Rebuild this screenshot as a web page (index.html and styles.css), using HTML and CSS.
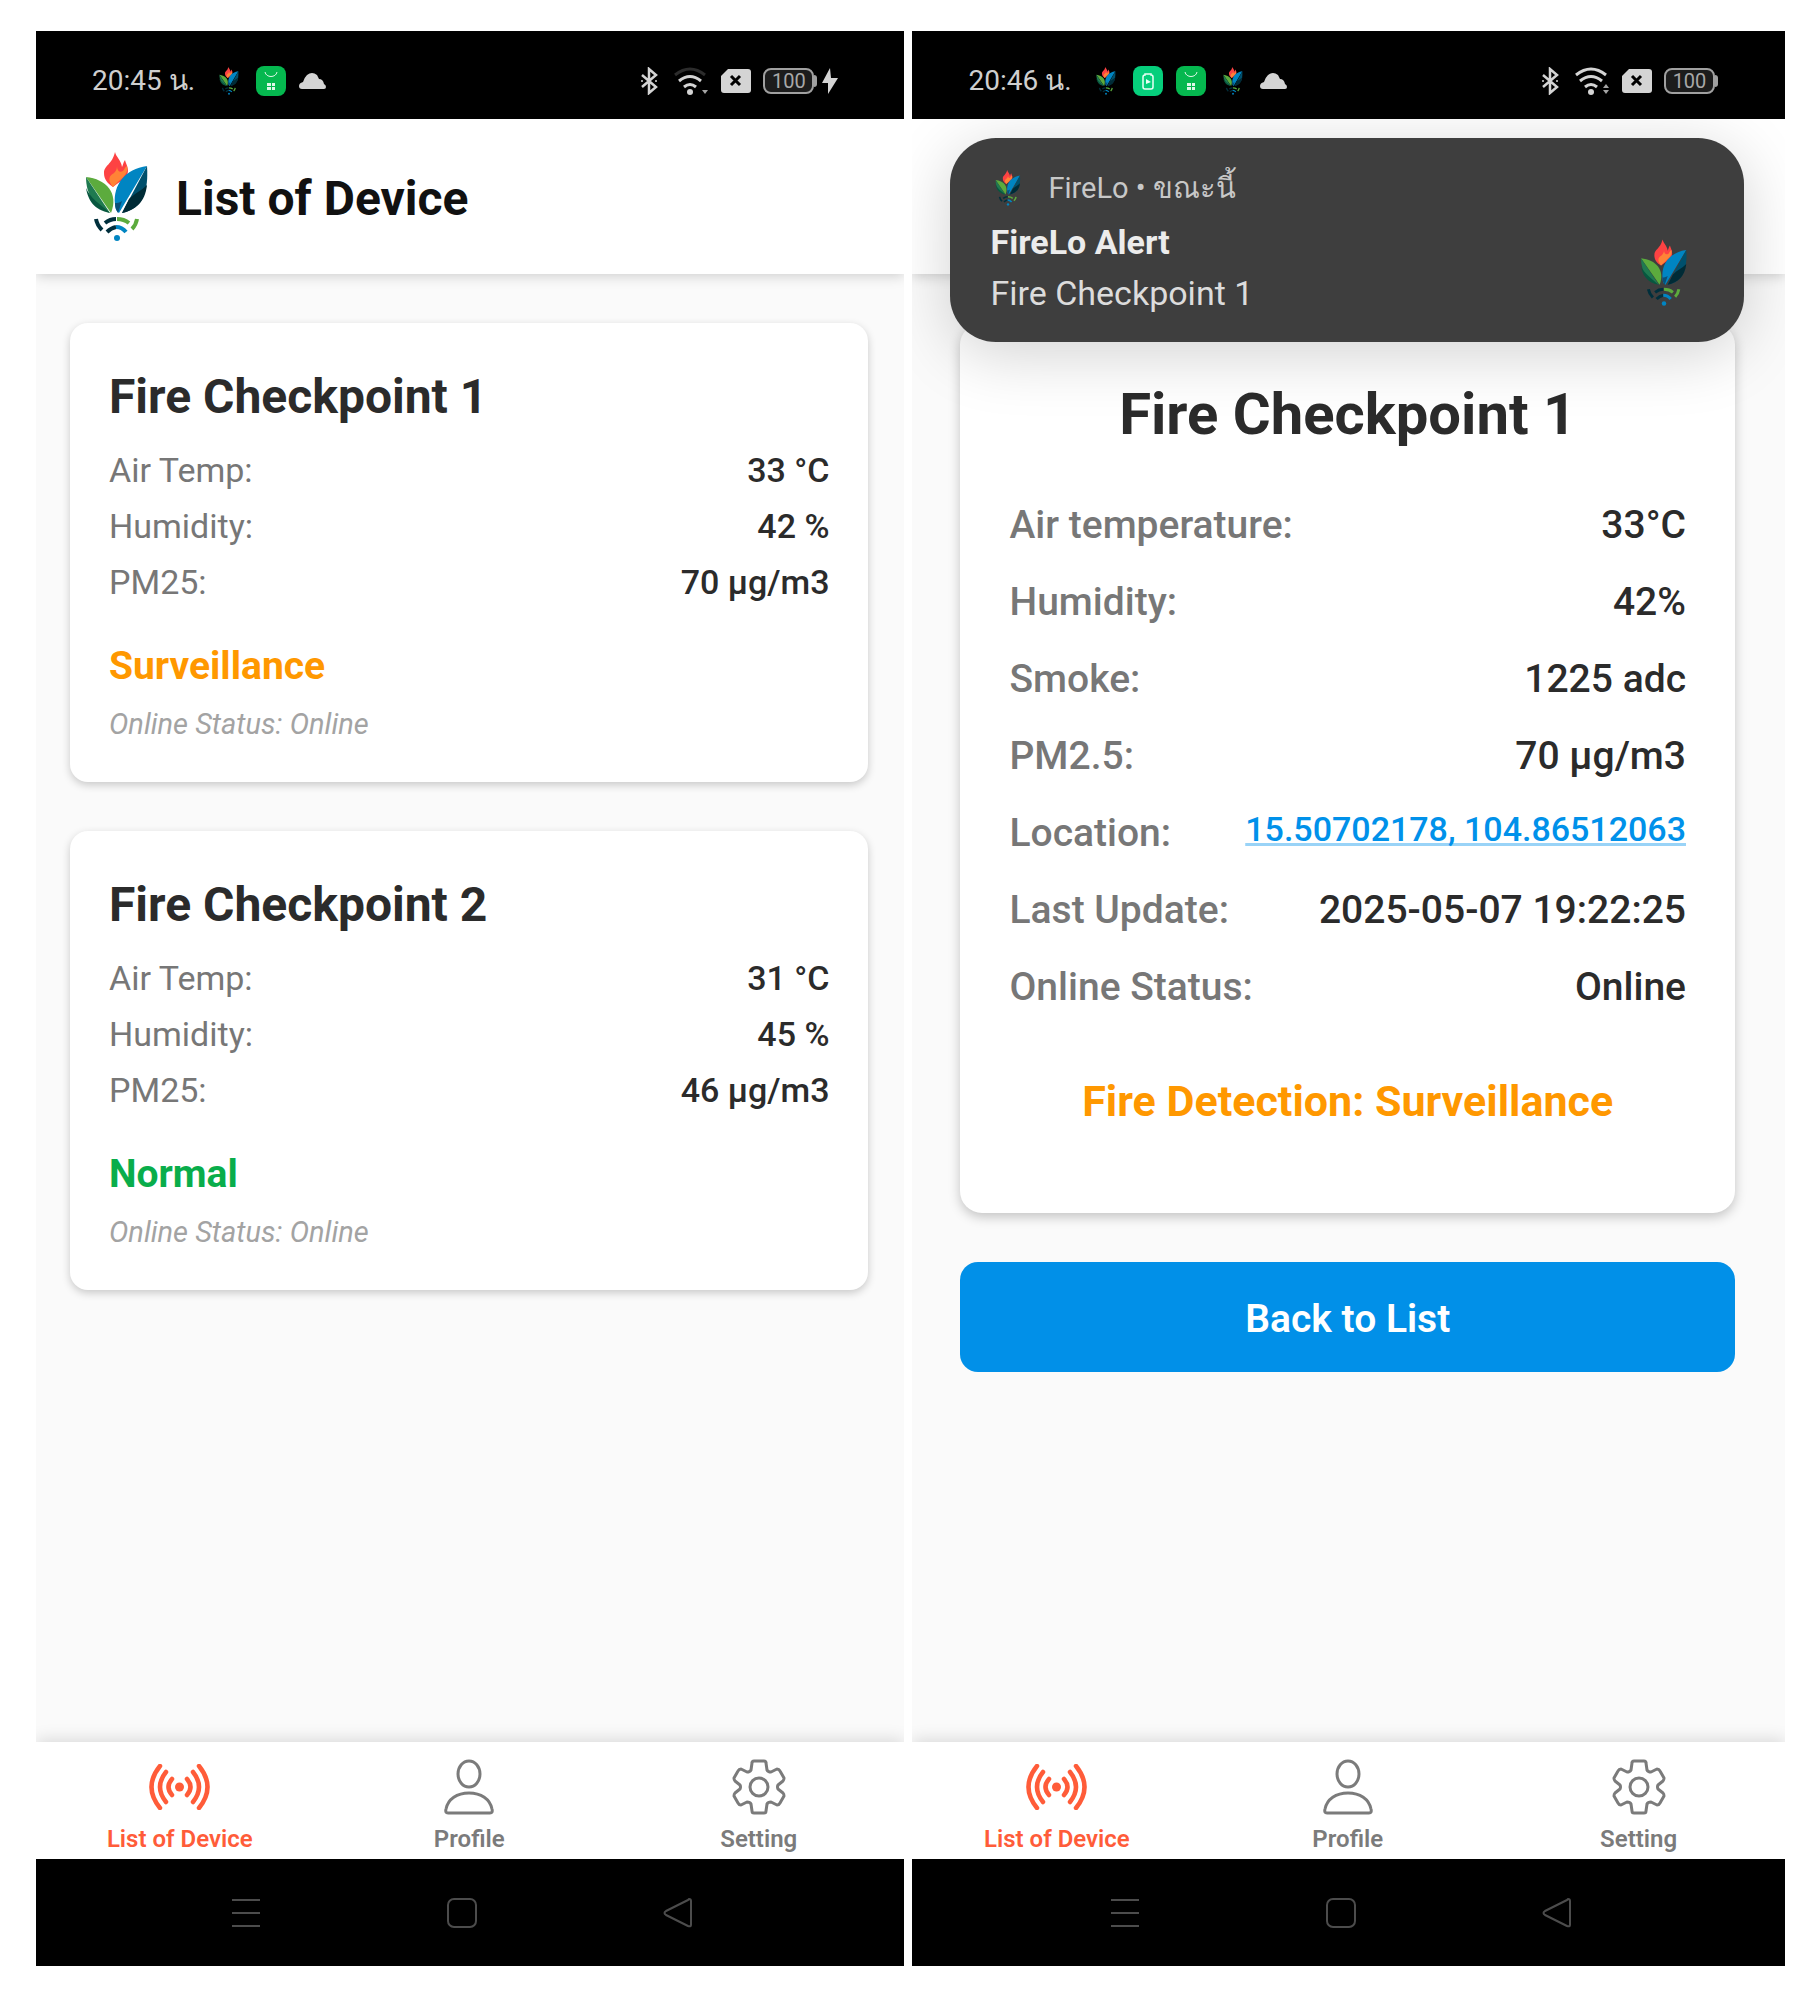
FILE: index.html
```html
<!DOCTYPE html>
<html lang="en">
<head>
<meta charset="utf-8">
<title>FireLo</title>
<link rel="stylesheet" href="styles.css">
</head>
<body>
<svg class="sprite" aria-hidden="true">
  <symbol id="logo" viewBox="0 0 62 90">
    <path fill="#fd4243" d="M29 0c1 5 6 8 7 15 1-2 1-4 3-7 1 4 3 6 3 11 0 6-7 10-15 16-6-4-9-8-9-14 0-8 8-8 11-21z"/>
    <path fill="#ff8336" d="M31 14c0 5 3 7 6 5 1-1 2-4 4-5 2 9-7 13-14 21-7-9-2-12 1-14 2-2 3-4 3-7z"/>
    <path fill="#5cab3d" d="M0 25c20 2 33 16 25 36z"/>
    <path fill="#1f7a50" d="M0 25c8 12 16 24 24 36C10 56 0 44 0 25z"/>
    <path fill="#08573f" d="M0 36c4 10 14 16 24 25C8 58 2 48 0 36z"/>
    <path fill="#0085c2" d="M61 14C39 17 27 33 29 52c0 4 1 7 4 9z"/>
    <path fill="#0a4f77" d="M29 51c2 0 4 0 7-2l-4 12c-2-3-3-6-3-10z"/>
    <path fill="#00506d" d="M61 14L36 61c18-4 27-17 25-47z"/>
    <path fill="#002b36" d="M61 33c-6 6-12 8-18 14l-7 14c14-3 23-11 25-28z"/>
    <g fill="none" stroke-width="4">
      <path stroke="#002f3c" d="M10 67q1 6 6 11M19 71q5-4 11-4M21 80q4-4 9-5"/>
      <path stroke="#5cab3d" d="M31 67q7 0 12 4M51 67q-1 6-5 10"/>
      <path stroke="#0085c2" d="M30 75q6 0 10 5"/>
    </g>
    <circle cx="31" cy="86" r="3" fill="#0085c2"/>
  </symbol>
  <symbol id="shop" viewBox="0 0 30 30">
    <rect width="30" height="30" rx="8" fill="#05b84f"/>
    <path fill="none" stroke="#dff7e8" stroke-width="1" d="M9 6c1 6 11 6 12 0"/>
    <path fill="#dff7e8" d="M11 17h4v3h-4zM16 17h3v3h-3zM11 21h4v3h-4zM16 21h3v3h-3z"/>
  </symbol>
  <symbol id="power" viewBox="0 0 30 30">
    <rect width="30" height="30" rx="8" fill="#06cf7c"/>
    <path fill="none" stroke="#eafff5" stroke-width="1.5" d="M12 8h6v1q2 0 2 2v10q0 2-2 2h-6q-2 0-2-2V11q0-2 2-2z"/>
    <path fill="#eafff5" d="M13 13l5 3-5 2z"/>
  </symbol>
  <symbol id="cloud" viewBox="0 0 27 16">
    <path fill="#d4d4d4" d="M3 16Q0 16 0 13q0-3 4-4 1-4 4-7 5-4 10 0l2 4q4 0 5 5 2 1 2 3 0 2-2 2z"/>
  </symbol>
  <symbol id="bluetooth" viewBox="0 0 18 28">
    <path fill="none" stroke="#d4d4d4" stroke-width="2.500" d="M2 8l14 12-7 6V2l7 6L2 20"/>
    <circle cx="2" cy="14" r="1" fill="#d4d4d4"/><circle cx="16" cy="14" r="1" fill="#d4d4d4"/>
  </symbol>
  <symbol id="wifi" viewBox="0 0 35 28">
    <g fill="none" stroke="#d4d4d4" stroke-width="3">
      <path d="M5 14q11-9 22 0M10 20q6-5 12 0"/>
    </g>
    <circle cx="16" cy="25" r="3" fill="#d4d4d4"/>
    <path fill="#a5a5a5" d="M28 23h6l-3 4z"/>
  </symbol>
  <symbol id="sim" viewBox="0 0 30 24">
    <path fill="#d4d4d4" d="M7 0h20q3 0 3 3v18q0 3-3 3H3q-3 0-3-3V7z"/>
    <path stroke="#000" stroke-width="3" d="M10 7l9 9M19 7l-9 9"/>
  </symbol>
  <symbol id="bolt" viewBox="0 0 16 26">
    <path fill="#d4d4d4" d="M8 0L0 15h6v11l10-16H9z"/>
  </symbol>
  <symbol id="signal" viewBox="0 0 61 46">
    <circle cx="30.500" cy="23" r="4.500" fill="currentColor"/>
    <g fill="none" stroke="currentColor" stroke-width="4.500" stroke-linecap="round">
      <path d="M23 15q-7 8 0 16M17 8q-12 15 0 30M11 2q-17 21 0 42M38 15q7 8 0 16M44 8q12 15 0 30M50 2q17 21 0 42"/>
    </g>
  </symbol>
  <symbol id="person" viewBox="0 0 50 56">
    <g fill="none" stroke="currentColor" stroke-width="3">
      <ellipse cx="25" cy="15" rx="11" ry="13"/>
      <path d="M4 54q-3 0-2-4c2-10 11-16 23-16s21 6 23 16q1 4-2 4z"/>
    </g>
  </symbol>
  <symbol id="gear" viewBox="0 0 54 56">
    <g fill="none" stroke="currentColor" stroke-width="3" stroke-linejoin="round">
      <circle cx="27" cy="28" r="9"/>
      <path d="M22 2h10q2 0 2 2l1 7q1 2 4 2l6-3q2 0 3 2l4 7q0 2-1 3l-5 4q-1 2 0 4l5 4q1 1 1 3l-4 7q-1 2-3 2l-6-3q-3 0-4 2l-1 7q0 2-2 2H22q-2 0-2-2l-1-7q-1-2-4-2l-6 3q-2 0-3-2l-4-7q0-2 1-3l5-4q1-2 0-4l-5-4q-1-1-1-3l4-7q1-2 3-2l6 3q3 0 4-2l1-7q0-2 2-2z"/>
    </g>
  </symbol>
  <symbol id="menu" viewBox="0 0 30 32">
    <path stroke="currentColor" stroke-width="2" d="M1 3h28M1 16h28M1 29h28"/>
  </symbol>
  <symbol id="home" viewBox="0 0 30 32">
    <rect x="1" y="2" width="28" height="28" rx="6" fill="none" stroke="currentColor" stroke-width="2"/>
  </symbol>
  <symbol id="back" viewBox="0 0 30 32">
    <path fill="none" stroke="currentColor" stroke-width="2" stroke-linejoin="round" d="M26 2q2 0 2 2v24q0 2-3 1L3 18q-3-2 0-4L25 3z"/>
  </symbol>
</svg>

<section class="phone">
  <div class="statusbar">
    <span class="clock">20:45 น.</span>
    <div class="notices">
      <svg class="i-logo"><use href="#logo"/></svg>
      <svg class="i-app"><use href="#shop"/></svg>
      <svg class="i-cloud"><use href="#cloud"/></svg>
    </div>
    <div class="system">
      <svg class="i-bt"><use href="#bluetooth"/></svg>
      <svg class="i-wifi"><use href="#wifi"/><path d="M1 8q15-12 30 0" fill="none" stroke="#2c2c2c" stroke-width="3"/></svg>
      <svg class="i-sim"><use href="#sim"/></svg>
      <span class="battery">100</span>
      <svg class="i-bolt"><use href="#bolt"/></svg>
    </div>
  </div>
  <header class="appbar">
    <svg class="appbar-logo"><use href="#logo"/></svg>
    <h1 class="appbar-title">List of Device</h1>
  </header>
  <main class="content content-list">
    <article class="card device">
      <h2 class="device-name">Fire Checkpoint 1</h2>
      <dl class="readings">
        <div class="reading"><dt>Air Temp:</dt><dd>33 °C</dd></div>
        <div class="reading"><dt>Humidity:</dt><dd>42 %</dd></div>
        <div class="reading"><dt>PM25:</dt><dd>70 µg/m3</dd></div>
      </dl>
      <p class="device-state warn">Surveillance</p>
      <p class="device-online">Online Status: Online</p>
    </article>
    <article class="card device">
      <h2 class="device-name">Fire Checkpoint 2</h2>
      <dl class="readings">
        <div class="reading"><dt>Air Temp:</dt><dd>31 °C</dd></div>
        <div class="reading"><dt>Humidity:</dt><dd>45 %</dd></div>
        <div class="reading"><dt>PM25:</dt><dd>46 µg/m3</dd></div>
      </dl>
      <p class="device-state ok">Normal</p>
      <p class="device-online">Online Status: Online</p>
    </article>
  </main>
  <nav class="tabs">
    <a class="tab active" href="#list"><svg class="i-signal"><use href="#signal"/></svg>List of Device</a>
    <a class="tab" href="#profile"><svg class="i-person"><use href="#person"/></svg>Profile</a>
    <a class="tab" href="#setting"><svg class="i-gear"><use href="#gear"/></svg>Setting</a>
  </nav>
  <div class="sysnav">
    <button class="sysbtn" aria-label="Recent apps"><svg><use href="#menu"/></svg></button>
    <button class="sysbtn" aria-label="Home"><svg><use href="#home"/></svg></button>
    <button class="sysbtn" aria-label="Back"><svg><use href="#back"/></svg></button>
  </div>
</section>

<section class="phone">
  <div class="statusbar">
    <span class="clock">20:46 น.</span>
    <div class="notices">
      <svg class="i-logo"><use href="#logo"/></svg>
      <svg class="i-app"><use href="#power"/></svg>
      <svg class="i-app"><use href="#shop"/></svg>
      <svg class="i-logo"><use href="#logo"/></svg>
      <svg class="i-cloud"><use href="#cloud"/></svg>
    </div>
    <div class="system system-unplugged">
      <svg class="i-bt"><use href="#bluetooth"/></svg>
      <svg class="i-wifi"><use href="#wifi"/><path d="M1 8q15-12 30 0" fill="none" stroke="#d4d4d4" stroke-width="3"/><path d="M28 21l3-4 3 4z" fill="#a5a5a5"/></svg>
      <svg class="i-sim"><use href="#sim"/></svg>
      <span class="battery">100</span>
    </div>
  </div>
  <div class="screen">
    <header class="appbar"></header>
    <aside class="toast">
      <div class="toast-text">
        <p class="toast-source"><svg class="toast-icon"><use href="#logo"/></svg>FireLo • ขณะนี้</p>
        <p class="toast-title">FireLo Alert</p>
        <p class="toast-body">Fire Checkpoint 1</p>
      </div>
      <svg class="toast-logo"><use href="#logo"/></svg>
    </aside>
    <main class="content content-detail">
      <article class="card detail">
        <h2 class="detail-name">Fire Checkpoint 1</h2>
        <dl class="facts">
          <div class="fact"><dt>Air temperature:</dt><dd>33°C</dd></div>
          <div class="fact"><dt>Humidity:</dt><dd>42%</dd></div>
          <div class="fact"><dt>Smoke:</dt><dd>1225 adc</dd></div>
          <div class="fact"><dt>PM2.5:</dt><dd>70 µg/m3</dd></div>
          <div class="fact"><dt>Location:</dt><dd><a class="coords" href="#map">15.50702178, 104.86512063</a></dd></div>
          <div class="fact"><dt>Last Update:</dt><dd>2025-05-07 19:22:25</dd></div>
          <div class="fact"><dt>Online Status:</dt><dd>Online</dd></div>
        </dl>
        <p class="detection warn">Fire Detection: Surveillance</p>
      </article>
      <button class="primary">Back to List</button>
    </main>
  </div>
  <nav class="tabs">
    <a class="tab active" href="#list"><svg class="i-signal"><use href="#signal"/></svg>List of Device</a>
    <a class="tab" href="#profile"><svg class="i-person"><use href="#person"/></svg>Profile</a>
    <a class="tab" href="#setting"><svg class="i-gear"><use href="#gear"/></svg>Setting</a>
  </nav>
  <div class="sysnav">
    <button class="sysbtn" aria-label="Recent apps"><svg><use href="#menu"/></svg></button>
    <button class="sysbtn" aria-label="Home"><svg><use href="#home"/></svg></button>
    <button class="sysbtn" aria-label="Back"><svg><use href="#back"/></svg></button>
  </div>
</section>
</body>
</html>
```
FILE: styles.css
```css
* { box-sizing: border-box; }

body {
  margin: 0;
  min-height: 100vh;
  padding: 31px 30px 29px 36px;
  display: grid;
  grid-template-columns: 868fr 872fr;
  gap: 8px;
  background: #fff;
  font-family: Roboto, "Noto Sans", sans-serif;
  color: #2b2b2b;
}

h1, h2, p, dl, dd { margin: 0; }
svg { display: block; flex: none; }
.sprite { position: absolute; width: 0; height: 0; }

.phone {
  display: flex;
  flex-direction: column;
  min-width: 0;
  overflow: hidden;
  background: #fafafa;
}

/* Status bar */
.statusbar {
  display: flex;
  align-items: center;
  height: 88px;
  padding: 12px 66px 0 56px;
  background: #000;
  color: #cfcfcf;
}
.clock { font-size: 28px; line-height: 36px; }
.notices { display: flex; align-items: center; gap: 13px; margin-left: 20px; }
.system { display: flex; align-items: center; gap: 12px; margin-left: auto; }
.system-unplugged { padding-right: 4px; }
.i-logo { width: 28px; height: 28px; }
.i-app { width: 30px; height: 30px; }
.i-cloud { width: 27px; height: 16px; }
.i-bt { width: 18px; height: 28px; margin-right: 4px; }
.i-wifi { width: 35px; height: 28px; }
.i-sim { width: 30px; height: 24px; }
.i-bolt { width: 16px; height: 26px; margin-left: -4px; }
.battery {
  position: relative;
  width: 51px;
  height: 26px;
  border: 2px solid #a0a0a0;
  border-radius: 8px;
  background: #1c1c1c;
  color: #a8a8a8;
  font-size: 20px;
  line-height: 23px;
  text-align: center;
}
.battery::after {
  content: "";
  position: absolute;
  left: 49px;
  top: 5px;
  width: 3px;
  height: 12px;
  border-radius: 0 3px 3px 0;
  background: #a0a0a0;
}

/* App bar */
.appbar {
  display: flex;
  align-items: center;
  gap: 28px;
  height: 155px;
  padding: 0 50px;
  background: #fff;
  box-shadow: 0 2px 12px rgba(0, 0, 0, .18);
}
.appbar-logo { width: 62px; height: 90px; }
.appbar-title { padding-top: 4px; font-size: 48px; line-height: 56px; font-weight: 700; color: #111; }

/* Content */
.content { flex: 1; display: flex; flex-direction: column; gap: 49px; }
.content-list { padding: 49px 36px 49px 34px; }
.content-detail { padding: 49px 50px 49px 48px; }
.card {
  background: #fff;
  border-radius: 18px;
  box-shadow: 0 3px 8px rgba(0, 0, 0, .2);
}
.device { padding: 44px 39px 30px; }
.device-name { font-size: 48px; line-height: 60px; font-weight: 700; }
.readings { padding: 15px 0 26px; }
.reading { display: flex; justify-content: space-between; font-size: 34px; line-height: 56px; }
.reading dt { color: #777; }
.reading dd { font-weight: 500; }
.device-state { font-size: 39px; line-height: 60px; font-weight: 700; }
.device-online { font-size: 29px; line-height: 56px; font-style: italic; color: #a3a3a3; }
.warn { color: #ff9800; }
.ok { color: #09ad4b; }

.detail { padding: 55px 49px 80px; border-radius: 22px; box-shadow: 0 4px 12px rgba(0, 0, 0, .22); }
.detail-name { font-size: 58px; line-height: 72px; font-weight: 700; text-align: center; }
.facts { padding: 47px 0 54px; display: grid; gap: 21px; }
.fact { display: flex; justify-content: space-between; font-size: 39px; line-height: 56px; font-weight: 500; }
.fact dt { color: #777; }
.coords {
  display: block;
  font-size: 34px;
  line-height: 48px;
  color: #0091ea;
  text-decoration: underline 3px rgba(0, 145, 234, .4);
  text-decoration-skip-ink: none;
}
.detection { font-size: 43px; line-height: 64px; font-weight: 700; text-align: center; }
.primary {
  height: 110px;
  padding: 4px 0 0;
  border: 0;
  border-radius: 18px;
  background: #0190e8;
  color: #fff;
  font: 600 39px/56px Roboto, sans-serif;
}

/* Notification */
.screen { position: relative; flex: 1; display: flex; flex-direction: column; overflow: hidden; }
.toast {
  position: absolute;
  z-index: 1;
  top: 19px;
  left: 38px;
  right: 41px;
  display: flex;
  align-items: center;
  justify-content: space-between;
  padding: 20px 57px 22px 40px;
  border-radius: 46px;
  background: #3e3e3e;
  color: #dcdcdc;
  box-shadow: 0 12px 64px rgba(0, 0, 0, .18);
}
.toast-source { display: flex; align-items: center; gap: 22px; font-size: 29px; line-height: 60px; color: #c8c8c8; }
.toast-icon { width: 36px; height: 36px; }
.toast-title { font-size: 34px; line-height: 48px; font-weight: 700; color: #ececec; }
.toast-body { font-size: 34px; line-height: 54px; }
.toast-logo { width: 46px; height: 68px; margin-top: 68px; }

/* Tab bar */
.tabs {
  display: grid;
  grid-template-columns: repeat(3, 1fr);
  height: 117px;
  background: #fff;
  box-shadow: 0 -2px 16px rgba(0, 0, 0, .14);
}
.tab {
  display: flex;
  flex-direction: column;
  align-items: center;
  justify-content: space-between;
  padding: 17px 2px 4px 0;
  font-size: 24px;
  line-height: 32px;
  font-weight: 600;
  color: #7b7b7b;
  text-decoration: none;
}
.tab.active { color: #ff5c39; }
.tab svg { height: 56px; }
.i-signal { width: 61px; }
.i-person { width: 50px; }
.i-gear { width: 54px; }
.tab .i-signal { padding: 5px 0; }

/* System navigation */
.sysnav {
  display: flex;
  align-items: center;
  justify-content: center;
  gap: 186px;
  height: 107px;
  padding-right: 16px;
  background: #000;
}
.sysbtn { padding: 0; border: 0; background: none; color: #4c4c4c; }
.sysbtn svg { width: 30px; height: 32px; }
```
